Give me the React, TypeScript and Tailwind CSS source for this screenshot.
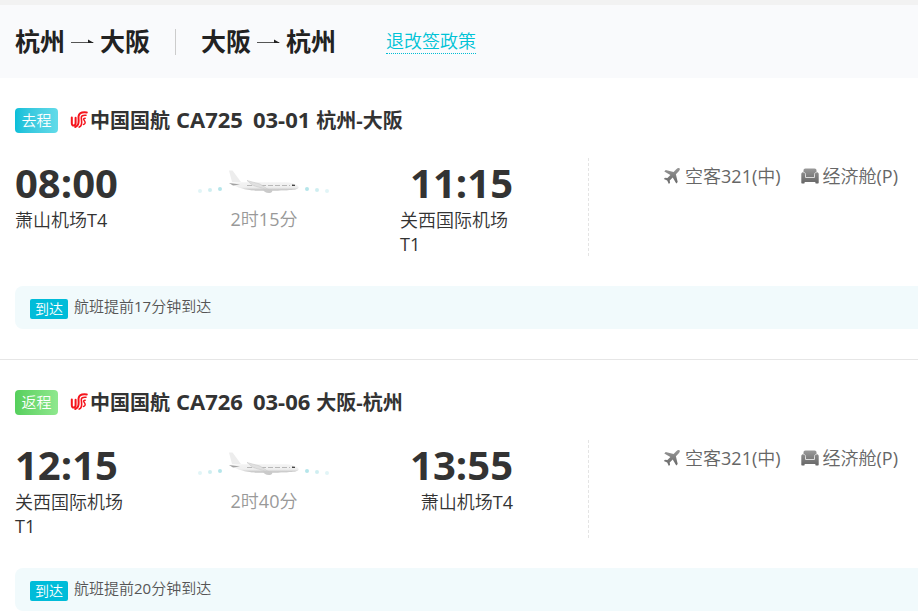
import { Fragment } from 'react'

type Flight = {
  tag: string
  tagClass: string
  no: string
  date: string
  route: string
  depart: { time: string; airport: string }
  arrive: { time: string; airport: string }
  duration: string
  notice: string
}

const flights: Flight[] = [
  {
    tag: '去程',
    tagClass: 'from-[#06bfd9] to-[#62dbe9]',
    no: 'CA725',
    date: '03-01',
    route: '杭州-大阪',
    depart: { time: '08:00', airport: '萧山机场T4' },
    arrive: { time: '11:15', airport: '关西国际机场T1' },
    duration: '2时15分',
    notice: '航班提前17分钟到达',
  },
  {
    tag: '返程',
    tagClass: 'from-[#55cf5c] to-[#8fe88e]',
    no: 'CA726',
    date: '03-06',
    route: '大阪-杭州',
    depart: { time: '12:15', airport: '关西国际机场T1' },
    arrive: { time: '13:55', airport: '萧山机场T4' },
    duration: '2时40分',
    notice: '航班提前20分钟到达',
  },
]

// Regular Latin next to the slightly lighter CJK cut
const bodyFont = "font-['Open_Sans','Noto_Sans_CJK_SC_DemiLight','Noto_Sans_CJK_SC',sans-serif] font-normal"

function RouteArrow() {
  return (
    <svg width="23" height="10" viewBox="0 0 23 10" aria-hidden="true">
      <path d="M0 5.5h22" stroke="#555" />
      <path d="M17 2.500 23 6h-6z" fill="#222" />
    </svg>
  )
}

function AirChinaLogo() {
  return (
    <svg width="18" height="18" viewBox="0 0 18 18" fill="none" stroke="#f5141c" strokeLinecap="round" aria-hidden="true">
      <path d="M1.800 6.500v5.700c0 3.200 3.600 3 3.800 0V6.800" strokeWidth="2" />
      <path d="M16.800 1.500C12.500 1 9 2 8.600 5.200c-.3 3 .6 6.200-.6 8.400-.7 1.300-1.600 2-2.800 2.400" strokeWidth="2" />
      <path d="M16 4.300c-3.400-.3-4.900.6-4.700 2.600.2 2.400 1 5-.2 7.400-.4.800-1 1.400-1.900 1.800" strokeWidth="1.600" />
      <path d="M15.200 7.200c-1.500 0-1.900.6-1.300 1.600.7 1.200 1.600 2 1.200 3.300-.3 1-1 1.300-1.700 1.300" strokeWidth="1.500" />
    </svg>
  )
}

function Airliner() {
  return (
    <svg width="132" height="30" viewBox="0 0 132 30" aria-hidden="true">
      <defs>
        <linearGradient id="fuselage" x1="0" y1="0" x2="0" y2="1">
          <stop offset="0" stopColor="#f3f3f3" />
          <stop offset=".6" stopColor="#efefef" />
          <stop offset=".85" stopColor="#d2d2d2" />
          <stop offset="1" stopColor="#a8a8a8" />
        </linearGradient>
      </defs>
      <g fill="#b5e5ea">
        <circle cx="2" cy="23" r="2" opacity=".4" />
        <circle cx="12" cy="22" r="2" opacity=".65" />
        <circle cx="22" cy="21" r="2" />
        <circle cx="109" cy="21" r="2" />
        <circle cx="119" cy="22" r="2" opacity=".65" />
        <circle cx="129" cy="23" r="2" opacity=".4" />
      </g>
      <path d="M31 2.500h3.500L43 14h-9z" fill="#ededed" />
      <path d="M31 15c5-1 12-.8 20-.7h35c7 0 13 2 14.500 4.500.8 1.700-2 3-7 3.300-9 .5-29 .7-40 .2C44 21.300 36 18 31 15z" fill="url(#fuselage)" />
      <path d="M49 17.500h43" stroke="#b8b8b8" strokeDasharray="5 2" />
      <path d="M31 15l11 1.500-7 1z" fill="#a2a2a2" />
      <path d="M49 12.500l6 5 16 4.500-9-6z" fill="#e0e0e0" stroke="#c4c4c4" strokeWidth=".5" />
      <path d="M65 21.500h9c.8 1.500 0 3.300-2 3.500-4 .3-6-1-7-3.500z" fill="#cacaca" />
      <path d="M94 16.500l3 .3v1.300h-3z" fill="#444" />
    </svg>
  )
}

function PlaneIcon() {
  return (
    <svg width="18" height="18" viewBox="0 0 18 18" aria-hidden="true">
      <linearGradient id="planeFill" x1="0" y1="0" x2="0" y2="1">
        <stop offset="0" stopColor="#999" />
        <stop offset="1" stopColor="#666" />
      </linearGradient>
      <path
        fill="url(#planeFill)"
        d="M16.500 1.300c.8.800.1 2.200-.7 3l-2.900 2.900 1.800 7.800-1.400 1.400-3.600-6-3 3 .3 2.400-1.100 1.100-1.700-3.300-3.400-1.700 1.200-1.100 2.400.3 3-3L1.300 4.500l1.400-1.400 7.900 1.800 2.900-2.900c.8-.8 2.200-1.500 3-.7z"
      />
    </svg>
  )
}

function SeatIcon() {
  return (
    <svg width="18" height="16" viewBox="0 0 18 16" aria-hidden="true">
      <linearGradient id="seatFill" x1="0" y1="0" x2="0" y2="1">
        <stop offset="0" stopColor="#999" />
        <stop offset="1" stopColor="#666" />
      </linearGradient>
      <path
        fill="url(#seatFill)"
        d="M4.500.5h9c1.400 0 2 .8 2 2v1.800c1.300 0 2.200.6 2.200 1.800v8.400c0 .6-.4 1-1 1h-1.500c-.6 0-.9-.5-.9-1.500H3.700c0 1-.3 1.500-.9 1.500H1.300c-.6 0-1-.4-1-1V6.100c0-1.200.9-1.800 2.200-1.800V2.500c0-1.200.6-2 2-2z"
      />
      <path d="M2.500 4.500c1.500 0 2 .6 2 1.700v3.300h9V6.200c0-1.100.5-1.700 2-1.700" fill="none" stroke="#ddd" />
    </svg>
  )
}

function Notice({ text }: { text: string }) {
  return (
    <div className={`ml-[15px] mt-[30px] flex h-[43px] items-start rounded-l-lg bg-[#f1fafc] pl-[15px] pt-2.5 ${bodyFont}`}>
      <span className="mr-1.5 mt-[3px] h-5 rounded-xs bg-[#00bcd9] px-[5px] text-sm leading-5 text-white">到达</span>
      <span className="text-[15px] leading-5 text-[#555]">{text}</span>
    </div>
  )
}

function FlightCard({ flight }: { flight: Flight }) {
  return (
    <section className="border-b border-[#e6e6e6] pb-[30px] pt-[29px]">
      <div className="flex h-[26px] items-center pl-[15px]">
        <span className={`mr-3 h-[25px] w-[43px] rounded-sm bg-linear-to-r text-center text-[15px] leading-[25px] text-white ${bodyFont} ${flight.tagClass}`}>
          {flight.tag}
        </span>
        <AirChinaLogo />
        <h2 className="ml-0.5 flex items-baseline text-xl leading-7 font-bold text-[#333]">
          <span>中国国航</span>
          <span className="ml-1.5 text-[22px] leading-7">{flight.no}</span>
          <span className="ml-2.5 text-[22px] leading-7">{flight.date}</span>
          <span className="ml-1.5">{flight.route}</span>
        </h2>
      </div>

      <div className="mt-[25px] flex">
        <div className={`flex h-[98px] w-[589px] border-r border-dashed border-[#e4e4e4] pl-[15px] text-[#333] ${bodyFont}`}>
          <div className="w-[113px]">
            <div className="text-[40px] font-bold leading-[50px]">{flight.depart.time}</div>
            <div className="text-lg leading-6">{flight.depart.airport}</div>
          </div>
          <div className="ml-[70px] flex w-[132px] flex-col items-center pt-2.5">
            <Airliner />
            <span className="mt-[9px] text-lg leading-6 text-[#999]">{flight.duration}</span>
          </div>
          <div className="ml-[70px] flex w-[113px] flex-col items-end">
            <div className="text-[40px] font-bold leading-[50px]">{flight.arrive.time}</div>
            <div className="text-lg leading-6">{flight.arrive.airport}</div>
          </div>
        </div>
        <div className={`flex h-9 flex-1 items-center justify-end pr-5 text-lg text-[#666] ${bodyFont}`}>
          <PlaneIcon />
          <span className="ml-1">空客321(中)</span>
          <span className="ml-5">
            <SeatIcon />
          </span>
          <span className="ml-1">经济舱(P)</span>
        </div>
      </div>

      <Notice text={flight.notice} />
    </section>
  )
}

export default function App() {
  return (
    <main className="overflow-hidden bg-white font-['Open_Sans','Noto_Sans_CJK_SC',sans-serif]">
      <header className="flex h-[78px] items-center border-t-5 border-[#f2f2f2] bg-[#f9fafc] pl-[15px] text-[25px] font-bold text-[#222]">
        {[
          ['杭州', '大阪'],
          ['大阪', '杭州'],
        ].map(([from, to], i) => (
          <Fragment key={from}>
            {i > 0 && <span className="mx-[25px] h-[26px] w-px bg-[#ccc]" />}
            <h1 className="flex items-center gap-[6px]">
              {from}
              <RouteArrow />
              {to}
            </h1>
          </Fragment>
        ))}
        <a href="#policy" className={`ml-[50px] border-b border-dotted border-[#00bcd4] text-lg leading-6 text-[#00c3d6] ${bodyFont}`}>
          退改签政策
        </a>
      </header>
      {flights.map((flight) => (
        <FlightCard key={flight.no} flight={flight} />
      ))}
    </main>
  )
}
